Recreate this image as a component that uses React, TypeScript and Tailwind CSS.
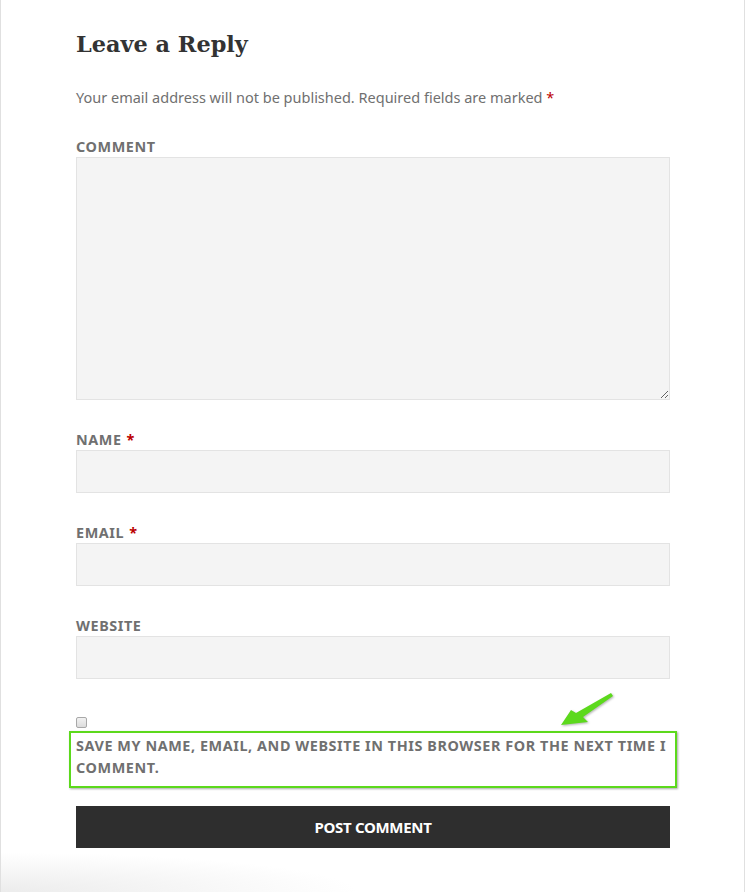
import React from "react";

const sans = "font-['Noto_Sans','Open_Sans',sans-serif]";

const Label = ({ text, required = false }: { text: string; required?: boolean }) => (
  <label className={`block text-[14.4px] font-bold uppercase tracking-[0.04em] leading-[20px] text-[#707070] ${sans}`}>
    {text}
    {required && <span className="ml-[5px] text-[#b00]">*</span>}
  </label>
);

const Field = ({ label, required }: { label: string; required?: boolean }) => (
  <div className="mt-[30px]">
    <Label text={label} required={required} />
    <input
      type="text"
      className="block h-[43px] w-full border border-[#e3e3e3] bg-[#f4f4f4] outline-none"
    />
  </div>
);

export default function App() {
  return (
    <div className="relative h-[892px] w-[745px] overflow-hidden border-x border-[#e0e0e0] bg-white">
      <div className="pl-[75px] pr-[74px] pt-[28px]">
        <h3 className="font-['DejaVu_Serif',serif] text-[22.4px] font-bold leading-[32px] text-[#333]">
          Leave a Reply
        </h3>
        <p className={`mt-[25px] text-[14.5px] leading-[24px] text-[#707070] ${sans}`}>
          Your email address will not be published. Required fields are marked{" "}
          <span className="text-[#b00]">*</span>
        </p>

        <div className="mt-[28px]">
          <Label text="Comment" />
          <textarea className="block h-[243px] w-full resize-y border border-[#e3e3e3] bg-[#f4f4f4] outline-none" />
        </div>

        <Field label="Name" required />
        <Field label="Email" required />
        <Field label="Website" />

        <div className="relative mt-[38px]">
          <input
            type="checkbox"
            className="block h-[11px] w-[11px] appearance-none rounded-[2px] border border-[#a8a8a8] bg-gradient-to-b from-[#f2f2f2] to-[#dcdcdc]"
          />
          <div className="-mx-[7px] mt-[3px] border-2 border-[#5cd91c] px-[5px] pb-[7px] pt-[2px] shadow-[1px_1px_2px_rgba(0,0,0,0.35)]">
            <span className={`block text-[14.4px] font-bold uppercase leading-[22px] tracking-[0.04em] text-[#707070] ${sans}`}>
              Save my name, email, and website in this browser for the next time I comment.
            </span>
          </div>
          <svg
            className="absolute left-[478px] top-[-25px] drop-shadow-[1px_1px_1px_rgba(0,0,0,0.3)]"
            width="64"
            height="40"
            viewBox="0 0 64 40"
          >
            <path d="M57 1 L59 4 L29 25 L34 30 L7 33 L17 18 L22 21 Z" fill="#5cd91c" />
          </svg>
        </div>

        <button
          className={`mt-[18px] block h-[42px] w-full bg-[#2e2e2e] text-[15px] font-bold uppercase tracking-[-0.02em] text-white ${sans}`}
        >
          Post Comment
        </button>
      </div>
      <div className="pointer-events-none absolute bottom-0 left-0 h-[40px] w-[360px] bg-[radial-gradient(ellipse_at_bottom_left,#ececec,transparent_70%)]" />
    </div>
  );
}
